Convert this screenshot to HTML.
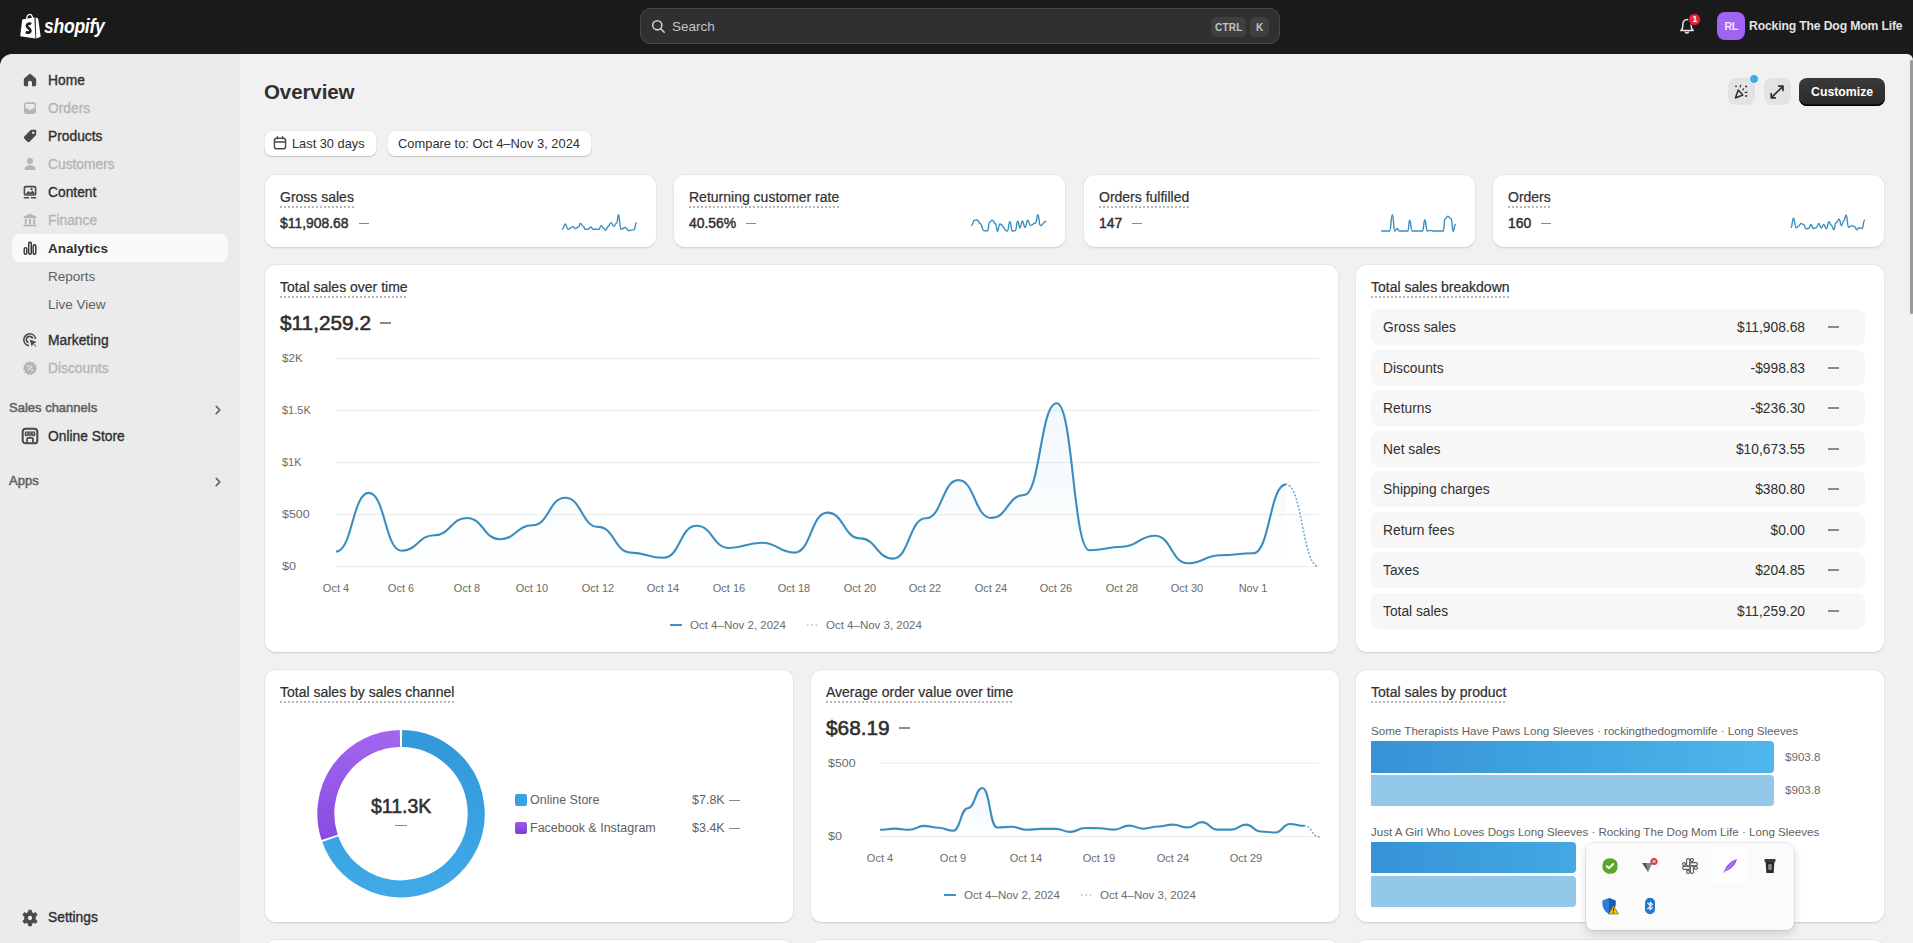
<!DOCTYPE html>
<html><head><meta charset="utf-8">
<style>
*{box-sizing:border-box;margin:0;padding:0}
html,body{width:1913px;height:943px;overflow:hidden;background:#1a1a1a;font-family:"Liberation Sans",sans-serif;color:#303030}
.abs{position:absolute}
.t{position:absolute;white-space:nowrap;line-height:1}
#top{position:absolute;left:0;top:0;width:1913px;height:54px;background:#1a1a1a}
#side{position:absolute;left:0;top:54px;width:240px;height:889px;background:#ebebeb;border-top-left-radius:12px}
#main{position:absolute;left:240px;top:54px;width:1673px;height:889px;background:#f1f1f1;border-top-right-radius:6px}
.nav{position:absolute;left:48px;font-size:13.8px;font-weight:normal;-webkit-text-stroke:0.35px currentColor;color:#303030;line-height:20px;height:20px}
.nav.dis{color:#b5b5b5}
.nav.sub{font-weight:normal;color:#616161;font-size:13.5px;-webkit-text-stroke:0}
.ico{position:absolute;left:22px;width:16px;height:16px}
.card{position:absolute;background:#fff;border-radius:12px;border:1px solid #e6e6e6;border-bottom-color:#d6d6d6;box-shadow:0 1px 1px 0 rgba(26,26,26,.05)}
.ttl{position:absolute;font-size:14px;font-weight:normal;-webkit-text-stroke:0.22px #303030;color:#303030;white-space:nowrap;line-height:16px;padding-bottom:2.5px;background-image:linear-gradient(90deg,#b8b8b8 50%,transparent 50%);background-size:4px 2px;background-repeat:repeat-x;background-position:0 100%}
.val{position:absolute;font-size:13.9px;font-weight:normal;-webkit-text-stroke:0.45px #303030;color:#303030;white-space:nowrap;line-height:16px}
.dash{display:inline-block;width:10px;height:1.5px;background:#8a8a8a;vertical-align:middle;margin-left:10px;position:relative;top:-1px}
.spark{position:absolute;top:200px;width:90px;height:40px}
.row{position:absolute;left:1371px;width:494px;height:36px;background:#f7f7f7;border-radius:8px;font-size:13.8px;color:#303030}
.row .l{position:absolute;left:12px;top:10.5px;line-height:16px}
.row .r{position:absolute;right:60px;top:10.5px;line-height:16px}
.row .d{position:absolute;left:457px;top:17px;width:11px;height:1.5px;background:#8a8a8a}
.ax{position:absolute;font-size:11px;color:#6b6b6b;white-space:nowrap;line-height:12px}
.grid{position:absolute;height:1px;background:#ebebeb}
</style></head><body>
<div id="top">
  <!-- shopify logo -->
  <svg class="abs" style="left:19px;top:13px" width="23" height="26" viewBox="0 0 23 26">
    <path d="M3.2,6.6 L15.4,4.2 L16.4,25.6 L1.2,23.3 Z" fill="#fff"/>
    <path d="M16.6,4.6 L19.2,5.4 L21.7,23.8 L17.2,25.6 Z" fill="#fff"/>
    <path d="M7.5,7 C7.6,3 9.2,1.4 10.8,1.3 C12.4,1.2 13.3,3 13.6,5.6" fill="none" stroke="#fff" stroke-width="1.3"/>
    <path d="M12,11.2 C10.8,10.3 7.9,10.4 7.9,12.8 C7.9,15 11.6,15.3 11.4,17.8 C11.2,19.9 8.6,20 6.8,19" fill="none" stroke="#1a1a1a" stroke-width="2.7"/>
  </svg>
  <div class="t" style="left:44px;top:17px;font-size:19.5px;font-weight:bold;font-style:italic;color:#fff;letter-spacing:-0.3px;transform:scaleX(0.9);transform-origin:0 0">shopify</div>
  <!-- search -->
  <div class="abs" style="left:640px;top:8px;width:640px;height:36px;background:#303030;border:1px solid #474747;border-radius:10px"></div>
  <svg class="abs" style="left:651px;top:19px" width="15" height="15" viewBox="0 0 15 15"><circle cx="6.3" cy="6.3" r="4.6" fill="none" stroke="#cfcfcf" stroke-width="1.6"/><path d="M9.8,9.8 L13.2,13.2" stroke="#cfcfcf" stroke-width="1.6" stroke-linecap="round"/></svg>
  <div class="t" style="left:672px;top:19px;font-size:13.5px;color:#c4c4c4;line-height:15px">Search</div>
  <div class="abs" style="left:1211px;top:17px;width:35px;height:20px;background:#3f3f3f;border-radius:5px"></div>
  <div class="t" style="left:1215px;top:22px;font-size:10px;font-weight:bold;color:#c4c4c4;line-height:11px;letter-spacing:0.2px">CTRL</div>
  <div class="abs" style="left:1250px;top:17px;width:19px;height:20px;background:#3f3f3f;border-radius:5px"></div>
  <div class="t" style="left:1256px;top:22px;font-size:10px;font-weight:bold;color:#c4c4c4;line-height:11px">K</div>
  <!-- bell -->
  <svg class="abs" style="left:1677px;top:16px" width="20" height="20" viewBox="0 0 20 20"><path d="M3.8,14.6 C5.2,13.6 5.8,12 5.8,10.2 L5.8,8.4 C5.8,5.8 7.6,3.6 10,3.6 C12.4,3.6 14.2,5.8 14.2,8.4 L14.2,10.2 C14.2,12 14.8,13.6 16.2,14.6 Z" fill="none" stroke="#e6e6e6" stroke-width="1.5" stroke-linejoin="round"/><path d="M8.4,15.6 C8.4,17.6 11.6,17.6 11.6,15.6" fill="none" stroke="#e6e6e6" stroke-width="1.5"/></svg>
  <div class="abs" style="left:1688px;top:12.5px;width:13px;height:13px;border-radius:50%;background:#e02838;border:1px solid #3a1418"></div>
  <div class="t" style="left:1692.5px;top:15px;font-size:8.5px;font-weight:bold;color:#fff;line-height:9px">1</div>
  <!-- avatar -->
  <div class="abs" style="left:1717px;top:12px;width:28px;height:28px;border-radius:8px;background:#a064f2"></div>
  <div class="t" style="left:1724.5px;top:21px;font-size:10.5px;font-weight:bold;color:#f6e6ff;line-height:11px;letter-spacing:-0.3px">RL</div>
  <div class="t" style="left:1749px;top:19px;font-size:12.2px;font-weight:bold;color:#e3e3e3;line-height:14px;letter-spacing:-0.15px">Rocking The Dog Mom Life</div>
</div>

<div id="side">
</div>
<!-- nav icons & labels -->
<svg class="ico" style="top:72px" viewBox="0 0 16 16"><path d="M8,1.6 L13.6,6.2 C14,6.5 14.2,7 14.2,7.5 L14.2,12.8 C14.2,13.6 13.6,14.2 12.8,14.2 L10,14.2 L10,10.6 C10,9.5 9.1,8.8 8,8.8 C6.9,8.8 6,9.5 6,10.6 L6,14.2 L3.2,14.2 C2.4,14.2 1.8,13.6 1.8,12.8 L1.8,7.5 C1.8,7 2,6.5 2.4,6.2 Z" fill="#4a4a4a"/></svg>
<div class="nav" style="top:71px">Home</div>
<svg class="ico" style="top:100px" viewBox="0 0 16 16"><rect x="2" y="2.2" width="12" height="11.8" rx="2.4" fill="#b5b5b5"/><path d="M3.6,4 L12.4,4 L12.4,8.4 L10.4,8.4 L8,10.6 L5.6,8.4 L3.6,8.4 Z" fill="#ebebeb"/></svg>
<div class="nav dis" style="top:99px">Orders</div>
<svg class="ico" style="top:128px" viewBox="0 0 16 16"><path d="M9.6,1.8 L13.2,1.8 C13.8,1.8 14.2,2.2 14.2,2.8 L14.2,6.4 C14.2,6.9 14,7.3 13.7,7.6 L7.6,13.7 C7,14.3 6,14.3 5.4,13.7 L2.3,10.6 C1.7,10 1.7,9 2.3,8.4 L8.4,2.3 C8.7,2 9.1,1.8 9.6,1.8 Z" fill="#4a4a4a"/><circle cx="11.3" cy="4.7" r="1.2" fill="#ebebeb"/></svg>
<div class="nav" style="top:127px">Products</div>
<svg class="ico" style="top:156px" viewBox="0 0 16 16"><circle cx="8" cy="5" r="3" fill="#b5b5b5"/><path d="M2.5,14 C2.5,10.8 4.8,9.3 8,9.3 C11.2,9.3 13.5,10.8 13.5,14 Z" fill="#b5b5b5"/></svg>
<div class="nav dis" style="top:155px">Customers</div>
<svg class="ico" style="top:184px" viewBox="0 0 16 16"><rect x="1.6" y="1.8" width="12.8" height="10" rx="2" fill="#4a4a4a"/><rect x="3.2" y="3.4" width="9.6" height="6.8" rx=".8" fill="#ebebeb"/><path d="M3.6,10 L6.4,7 L8.4,8.8 L10.4,6.6 L12.6,9 L12.6,10 Z" fill="#4a4a4a"/><circle cx="9.6" cy="5.2" r="1.1" fill="#4a4a4a"/><rect x="1.6" y="13" width="5.6" height="1.6" rx=".8" fill="#4a4a4a"/><rect x="8.6" y="13" width="5.8" height="1.6" rx=".8" fill="#4a4a4a"/></svg>
<div class="nav" style="top:183px">Content</div>
<svg class="ico" style="top:212px" viewBox="0 0 16 16"><path d="M8,1.4 L14.4,4.8 L14.4,6.2 L1.6,6.2 L1.6,4.8 Z" fill="#b5b5b5"/><rect x="2.8" y="7" width="2" height="5" fill="#b5b5b5"/><rect x="7" y="7" width="2" height="5" fill="#b5b5b5"/><rect x="11.2" y="7" width="2" height="5" fill="#b5b5b5"/><rect x="1.6" y="12.6" width="12.8" height="1.8" fill="#b5b5b5"/></svg>
<div class="nav dis" style="top:211px">Finance</div>
<div class="abs" style="left:12px;top:234px;width:216px;height:28px;background:#fafafa;border-radius:8px"></div>
<svg class="ico" style="top:240px" viewBox="0 0 16 16"><rect x="2.2" y="7.6" width="2.6" height="6.6" rx="1.3" fill="none" stroke="#303030" stroke-width="1.4"/><rect x="6.7" y="2.2" width="2.6" height="12" rx="1.3" fill="none" stroke="#303030" stroke-width="1.4"/><rect x="11.2" y="4.8" width="2.6" height="9.4" rx="1.3" fill="none" stroke="#303030" stroke-width="1.4"/></svg>
<div class="nav" style="top:239px;color:#303030;font-weight:bold;font-size:13.5px;-webkit-text-stroke:0">Analytics</div>
<div class="nav sub" style="top:267px">Reports</div>
<div class="nav sub" style="top:295px">Live View</div>
<svg class="ico" style="top:332px" viewBox="0 0 16 16"><path d="M13.6,7 C13.2,4 10.8,1.8 7.8,1.8 C4.5,1.8 1.8,4.5 1.8,7.8 C1.8,10.8 4,13.2 7,13.6" fill="none" stroke="#4a4a4a" stroke-width="1.6"/><path d="M10.6,6.6 C10.2,5.2 9.1,4.4 7.8,4.4 C5.9,4.4 4.4,5.9 4.4,7.8 C4.4,9.1 5.2,10.2 6.6,10.6" fill="none" stroke="#4a4a4a" stroke-width="1.6"/><path d="M7.6,7.6 L14.6,10 L11.6,11.4 L14.4,14.2 L13.8,14.8 L11,12 L9.8,14.8 Z" fill="#4a4a4a"/></svg>
<div class="nav" style="top:331px">Marketing</div>
<svg class="ico" style="top:360px" viewBox="0 0 16 16"><path d="M8,1.2 L9.7,2.6 L11.9,2.3 L12.6,4.4 L14.6,5.3 L14,7.5 L15,9.4 L13.3,10.8 L13.2,13 L11,13.4 L9.8,15.2 L8,14 L6.2,15.2 L5,13.4 L2.8,13 L2.7,10.8 L1,9.4 L2,7.5 L1.4,5.3 L3.4,4.4 L4.1,2.3 L6.3,2.6 Z" fill="#b5b5b5"/><path d="M5.8,10.4 L10.2,5.6" stroke="#ebebeb" stroke-width="1.3"/><circle cx="6" cy="6" r="1" fill="#ebebeb"/><circle cx="10" cy="10" r="1" fill="#ebebeb"/></svg>
<div class="nav dis" style="top:359px">Discounts</div>
<div class="t" style="left:9px;top:401px;font-size:13px;color:#616161;-webkit-text-stroke:0.5px #616161;line-height:14px">Sales channels</div>
<svg class="abs" style="left:212px;top:404px" width="12" height="12" viewBox="0 0 12 12"><path d="M4.2,2.4 L7.8,6 L4.2,9.6" fill="none" stroke="#616161" stroke-width="1.6" stroke-linecap="round" stroke-linejoin="round"/></svg>
<svg class="ico" style="top:427px;left:21px;width:18px;height:18px" viewBox="0 0 16 16"><rect x="1.5" y="1.5" width="13" height="13" rx="2.6" fill="none" stroke="#4a4a4a" stroke-width="1.8"/><path d="M3.6,4 L12.4,4 L12.8,6.6 C12.8,7.6 12.1,8.2 11.2,8.2 C10.4,8.2 9.6,7.6 9.6,6.8 C9.6,7.6 8.8,8.2 8,8.2 C7.2,8.2 6.4,7.6 6.4,6.8 C6.4,7.6 5.6,8.2 4.8,8.2 C3.9,8.2 3.2,7.6 3.2,6.6 Z" fill="#4a4a4a"/><path d="M5.2,4.6 L5,7 M8,4.6 L8,7 M10.8,4.6 L11,7" stroke="#ebebeb" stroke-width=".6"/><path d="M5.4,14 L5.4,10.6 C5.4,10 5.8,9.6 6.4,9.6 L9.6,9.6 C10.2,9.6 10.6,10 10.6,10.6 L10.6,14" fill="none" stroke="#4a4a4a" stroke-width="1.6"/></svg>
<div class="nav" style="top:427px">Online Store</div>
<div class="t" style="left:9px;top:474px;font-size:13px;color:#616161;-webkit-text-stroke:0.5px #616161;line-height:14px">Apps</div>
<svg class="abs" style="left:212px;top:476px" width="12" height="12" viewBox="0 0 12 12"><path d="M4.2,2.4 L7.8,6 L4.2,9.6" fill="none" stroke="#616161" stroke-width="1.6" stroke-linecap="round" stroke-linejoin="round"/></svg>
<svg class="ico" style="top:909px;left:21px;width:18px;height:18px" viewBox="0 0 16 16"><path d="M6.7,1 L9.3,1 L9.7,3.1 L11.1,3.9 L13.1,3.2 L14.4,5.4 L12.8,6.8 L12.8,9.2 L14.4,10.6 L13.1,12.8 L11.1,12.1 L9.7,12.9 L9.3,15 L6.7,15 L6.3,12.9 L4.9,12.1 L2.9,12.8 L1.6,10.6 L3.2,9.2 L3.2,6.8 L1.6,5.4 L2.9,3.2 L4.9,3.9 L6.3,3.1 Z" fill="#4a4a4a" stroke="#4a4a4a" stroke-width=".6" stroke-linejoin="round"/><circle cx="8" cy="8" r="1.9" fill="#ebebeb"/></svg>
<div class="nav" style="top:908px">Settings</div>

<div id="main"></div>
<!-- header -->
<div class="t" style="left:264px;top:81px;font-size:20.5px;font-weight:bold;color:#303030;line-height:22px;letter-spacing:-0.1px">Overview</div>
<div class="abs" style="left:1728px;top:78px;width:27px;height:27px;background:#e3e3e3;border-radius:8px"></div>
<svg class="abs" style="left:1731px;top:82px" width="20" height="20" viewBox="0 0 20 20"><path d="M4.4,16 L7.2,7.9 L11.8,13 Z" fill="none" stroke="#303030" stroke-width="1.5" stroke-linejoin="round"/><rect x="4.2" y="3.5" width="1.6" height="1.6" transform="rotate(45 5 4.3)" fill="#303030"/><path d="M9.7,3.4 L9.2,5" stroke="#303030" stroke-width="1.2" stroke-linecap="round"/><circle cx="15.2" cy="4.5" r="1" fill="#303030"/><path d="M12.6,6.8 L11.8,7.8" stroke="#303030" stroke-width="1.2" stroke-linecap="round"/><path d="M14.2,10.6 L16,10.1" stroke="#303030" stroke-width="1.2" stroke-linecap="round"/><circle cx="15.2" cy="14.1" r="1" fill="#303030"/></svg>
<div class="abs" style="left:1749px;top:74px;width:10px;height:10px;border-radius:50%;background:#44a7ec;border:1px solid #e8f6ff"></div>
<div class="abs" style="left:1764px;top:78px;width:27px;height:27px;background:#e3e3e3;border-radius:8px"></div>
<svg class="abs" style="left:1767px;top:82px" width="20" height="20" viewBox="0 0 20 20"><path d="M11.8,4.2 L16,4.2 L16,8.4 M15.6,4.6 L4.6,15.4 M4.2,11.6 L4.2,15.8 L8.4,15.8" fill="none" stroke="#303030" stroke-width="1.7" stroke-linecap="round" stroke-linejoin="round"/></svg>
<div class="abs" style="left:1799px;top:78px;width:86px;height:28px;background:linear-gradient(#3a3a3a,#2a2a2a);border-radius:8px;box-shadow:inset 0 -1.5px 0 #000"></div>
<div class="t" style="left:1811px;top:85px;font-size:12.3px;font-weight:bold;color:#fff;line-height:14px">Customize</div>

<div class="abs" style="left:264px;top:130px;width:113px;height:27px;background:#fff;border-radius:8px;box-shadow:inset 0 -1px 0 rgba(0,0,0,.17),inset 0 0 0 1px rgba(0,0,0,.08)"></div>
<svg class="abs" style="left:272px;top:135px" width="16" height="16" viewBox="0 0 16 16"><rect x="2.4" y="3.2" width="11.2" height="10.6" rx="2.4" fill="none" stroke="#4a4a4a" stroke-width="1.4"/><path d="M2.6,7 L13.4,7 M5.4,1.8 L5.4,3.6 M10.6,1.8 L10.6,3.6" stroke="#4a4a4a" stroke-width="1.4" stroke-linecap="round"/></svg>
<div class="t" style="left:292px;top:137px;font-size:12.8px;color:#303030;line-height:14px">Last 30 days</div>
<div class="abs" style="left:387px;top:130px;width:205px;height:27px;background:#fff;border-radius:8px;box-shadow:inset 0 -1px 0 rgba(0,0,0,.17),inset 0 0 0 1px rgba(0,0,0,.08)"></div>
<div class="t" style="left:398px;top:137px;font-size:12.9px;color:#303030;line-height:14px">Compare to: Oct 4–Nov 3, 2024</div>

<!-- metric cards -->
<div class="card" style="left:264px;top:174px;width:393px;height:74px"></div>
<div class="ttl" style="left:280px;top:189px">Gross sales</div>
<div class="val" style="left:280px;top:215px">$11,908.68<span class="dash"></span></div>
<svg class="spark" style="left:555px" viewBox="0 0 1913 850" preserveAspectRatio="none"><path d="M155.0,620.0 C187.5,620.0 187.5,510.0 220.0,510.0 C247.5,510.0 247.5,625.0 275.0,625.0 C327.5,625.0 327.5,565.0 380.0,565.0 C405.0,565.0 405.0,605.0 430.0,605.0 C465.0,605.0 465.0,575.0 500.0,575.0 C520.0,575.0 520.0,500.0 540.0,500.0 C570.0,500.0 570.0,560.0 600.0,560.0 C620.0,560.0 620.0,620.0 640.0,620.0 C670.0,620.0 670.0,625.0 700.0,625.0 C730.0,625.0 730.0,575.0 760.0,575.0 C785.0,575.0 785.0,620.0 810.0,620.0 C870.0,620.0 870.0,625.0 930.0,625.0 C955.0,625.0 955.0,545.0 980.0,545.0 C1000.0,545.0 1000.0,590.0 1020.0,590.0 C1050.0,590.0 1050.0,640.0 1080.0,640.0 C1100.0,640.0 1100.0,570.0 1120.0,570.0 C1155.0,570.0 1155.0,480.0 1190.0,480.0 C1220.0,480.0 1220.0,560.0 1250.0,560.0 C1280.0,560.0 1280.0,490.0 1310.0,490.0 C1330.0,490.0 1330.0,315.0 1350.0,315.0 C1375.0,315.0 1375.0,620.0 1400.0,620.0 C1450.0,620.0 1450.0,585.0 1500.0,585.0 C1530.0,585.0 1530.0,650.0 1560.0,650.0 C1620.0,650.0 1620.0,630.0 1680.0,630.0 C1705.0,630.0 1705.0,490.0 1730.0,490.0" fill="none" stroke="#3b8dbf" stroke-width="30" stroke-linejoin="round" stroke-linecap="round"/></svg>
<div class="card" style="left:673px;top:174px;width:393px;height:74px"></div>
<div class="ttl" style="left:689px;top:189px">Returning customer rate</div>
<div class="val" style="left:689px;top:215px">40.56%<span class="dash"></span></div>
<svg class="spark" style="left:965px" viewBox="0 0 1913 850" preserveAspectRatio="none"><path d="M140.0,545.0 C170.0,545.0 170.0,430.0 200.0,430.0 C230.0,430.0 230.0,425.0 260.0,425.0 C290.0,425.0 290.0,500.0 320.0,500.0 C360.0,500.0 360.0,650.0 400.0,650.0 C440.0,650.0 440.0,655.0 480.0,655.0 C500.0,655.0 500.0,470.0 520.0,470.0 C550.0,470.0 550.0,430.0 580.0,430.0 C615.0,430.0 615.0,510.0 650.0,510.0 C670.0,510.0 670.0,665.0 690.0,665.0 C715.0,665.0 715.0,510.0 740.0,510.0 C820.0,510.0 820.0,660.0 900.0,660.0 C927.5,660.0 927.5,460.0 955.0,460.0 C980.0,460.0 980.0,660.0 1005.0,660.0 C1037.5,660.0 1037.5,650.0 1070.0,650.0 C1095.0,650.0 1095.0,450.0 1120.0,450.0 C1145.0,450.0 1145.0,590.0 1170.0,590.0 C1195.0,590.0 1195.0,445.0 1220.0,445.0 C1247.5,445.0 1247.5,585.0 1275.0,585.0 C1305.0,585.0 1305.0,430.0 1335.0,430.0 C1362.5,430.0 1362.5,540.0 1390.0,540.0 C1445.0,540.0 1445.0,490.0 1500.0,490.0 C1525.0,490.0 1525.0,310.0 1550.0,310.0 C1575.0,310.0 1575.0,545.0 1600.0,545.0 C1660.0,545.0 1660.0,455.0 1720.0,455.0" fill="none" stroke="#3b8dbf" stroke-width="30" stroke-linejoin="round" stroke-linecap="round"/></svg>
<div class="card" style="left:1083px;top:174px;width:393px;height:74px"></div>
<div class="ttl" style="left:1099px;top:189px">Orders fulfilled</div>
<div class="val" style="left:1099px;top:215px">147<span class="dash"></span></div>
<svg class="spark" style="left:1375px" viewBox="0 0 1913 850" preserveAspectRatio="none"><path d="M140.0,660.0 C225.0,660.0 225.0,660.0 310.0,660.0 C340.0,660.0 340.0,310.0 370.0,310.0 C395.0,310.0 395.0,660.0 420.0,660.0 C445.0,660.0 445.0,605.0 470.0,605.0 C495.0,605.0 495.0,660.0 520.0,660.0 C610.0,660.0 610.0,660.0 700.0,660.0 C717.5,660.0 717.5,430.0 735.0,430.0 C762.5,430.0 762.5,660.0 790.0,660.0 C900.0,660.0 900.0,660.0 1010.0,660.0 C1035.0,660.0 1035.0,420.0 1060.0,420.0 C1085.0,420.0 1085.0,660.0 1110.0,660.0 C1145.0,660.0 1145.0,645.0 1180.0,645.0 C1200.0,645.0 1200.0,660.0 1220.0,660.0 C1335.0,660.0 1335.0,660.0 1450.0,660.0 C1470.0,660.0 1470.0,400.0 1490.0,400.0 C1520.0,400.0 1520.0,345.0 1550.0,345.0 C1585.0,345.0 1585.0,400.0 1620.0,400.0 C1640.0,400.0 1640.0,665.0 1660.0,665.0 C1685.0,665.0 1685.0,520.0 1710.0,520.0" fill="none" stroke="#3b8dbf" stroke-width="30" stroke-linejoin="round" stroke-linecap="round"/></svg>
<div class="card" style="left:1492px;top:174px;width:393px;height:74px"></div>
<div class="ttl" style="left:1508px;top:189px">Orders</div>
<div class="val" style="left:1508px;top:215px">160<span class="dash"></span></div>
<svg class="spark" style="left:1785px" viewBox="0 0 1913 850" preserveAspectRatio="none"><path d="M130.0,580.0 C155.0,580.0 155.0,385.0 180.0,385.0 C207.5,385.0 207.5,590.0 235.0,590.0 C262.5,590.0 262.5,555.0 290.0,555.0 C315.0,555.0 315.0,500.0 340.0,500.0 C370.0,500.0 370.0,520.0 400.0,520.0 C422.5,520.0 422.5,610.0 445.0,610.0 C477.5,610.0 477.5,600.0 510.0,600.0 C532.5,600.0 532.5,520.0 555.0,520.0 C577.5,520.0 577.5,605.0 600.0,605.0 C630.0,605.0 630.0,590.0 660.0,590.0 C690.0,590.0 690.0,500.0 720.0,500.0 C745.0,500.0 745.0,595.0 770.0,595.0 C797.5,595.0 797.5,520.0 825.0,520.0 C852.5,520.0 852.5,610.0 880.0,610.0 C907.5,610.0 907.5,460.0 935.0,460.0 C957.5,460.0 957.5,530.0 980.0,530.0 C1010.0,530.0 1010.0,630.0 1040.0,630.0 C1060.0,630.0 1060.0,490.0 1080.0,490.0 C1115.0,490.0 1115.0,410.0 1150.0,410.0 C1175.0,410.0 1175.0,545.0 1200.0,545.0 C1225.0,545.0 1225.0,440.0 1250.0,440.0 C1275.0,440.0 1275.0,320.0 1300.0,320.0 C1325.0,320.0 1325.0,580.0 1350.0,580.0 C1385.0,580.0 1385.0,545.0 1420.0,545.0 C1450.0,545.0 1450.0,565.0 1480.0,565.0 C1502.5,565.0 1502.5,635.0 1525.0,635.0 C1547.5,635.0 1547.5,590.0 1570.0,590.0 C1605.0,590.0 1605.0,605.0 1640.0,605.0 C1665.0,605.0 1665.0,430.0 1690.0,430.0" fill="none" stroke="#3b8dbf" stroke-width="30" stroke-linejoin="round" stroke-linecap="round"/></svg>

<!-- total sales over time -->
<div class="card" style="left:264px;top:264px;width:1075px;height:389px"></div>
<div class="ttl" style="left:280px;top:279px">Total sales over time</div>
<div class="t" style="left:280px;top:312px;font-size:20.8px;font-weight:normal;-webkit-text-stroke:0.6px #303030;color:#303030;line-height:22px">$11,259.2<span class="dash" style="margin-left:9px;width:11px;height:2px;top:-2px;-webkit-text-stroke:0"></span></div>
<svg class="abs" style="left:0;top:0;z-index:5;pointer-events:none" width="1913" height="943" viewBox="0 0 1913 943">
  <defs><linearGradient id="gf" x1="0" y1="0" x2="0" y2="1"><stop offset="0" stop-color="#3f93c6" stop-opacity=".07"/><stop offset="1" stop-color="#3f93c6" stop-opacity=".005"/></linearGradient></defs>
  <g fill="#ededed">
    <rect x="336" y="358" width="983" height="1.2"/><rect x="336" y="410" width="983" height="1.2"/><rect x="336" y="462" width="983" height="1.2"/><rect x="336" y="514" width="983" height="1.2"/><rect x="336" y="566" width="983" height="1.2"/>
    <rect x="880" y="762.5" width="439" height="1.2"/><rect x="880" y="836" width="439" height="1.2"/>
  </g>
  <path d="M336.0,551.6 C352.4,551.6 352.4,492.9 368.8,492.9 C385.1,492.9 385.1,550.7 401.5,550.7 C417.9,550.7 417.9,535.2 434.3,535.2 C450.7,535.2 450.7,518.0 467.0,518.0 C483.4,518.0 483.4,539.2 499.8,539.2 C516.2,539.2 516.2,525.3 532.6,525.3 C548.9,525.3 548.9,497.8 565.3,497.8 C581.7,497.8 581.7,526.9 598.1,526.9 C614.5,526.9 614.5,552.6 630.8,552.6 C647.2,552.6 647.2,557.8 663.6,557.8 C680.0,557.8 680.0,525.8 696.4,525.8 C712.7,525.8 712.7,548.0 729.1,548.0 C745.5,548.0 745.5,542.7 761.9,542.7 C778.3,542.7 778.3,552.6 794.6,552.6 C811.0,552.6 811.0,512.6 827.4,512.6 C843.8,512.6 843.8,538.4 860.2,538.4 C876.5,538.4 876.5,558.6 892.9,558.6 C909.3,558.6 909.3,518.3 925.7,518.3 C942.1,518.3 942.1,480.1 958.4,480.1 C974.8,480.1 974.8,517.9 991.2,517.9 C1007.6,517.9 1007.6,495.0 1024.0,495.0 C1040.3,495.0 1040.3,403.3 1056.7,403.3 C1073.1,403.3 1073.1,550.3 1089.5,550.3 C1105.9,550.3 1105.9,546.7 1122.2,546.7 C1138.6,546.7 1138.6,535.7 1155.0,535.7 C1171.4,535.7 1171.4,563.3 1187.8,563.3 C1204.1,563.3 1204.1,555.2 1220.5,555.2 C1236.9,555.2 1236.9,553.3 1253.3,553.3 C1269.7,553.3 1269.7,484.4 1286.0,484.4 L1286.0,566.7 L336,566.7 Z" fill="url(#gf)"/>
  <path d="M336.0,551.6 C352.4,551.6 352.4,492.9 368.8,492.9 C385.1,492.9 385.1,550.7 401.5,550.7 C417.9,550.7 417.9,535.2 434.3,535.2 C450.7,535.2 450.7,518.0 467.0,518.0 C483.4,518.0 483.4,539.2 499.8,539.2 C516.2,539.2 516.2,525.3 532.6,525.3 C548.9,525.3 548.9,497.8 565.3,497.8 C581.7,497.8 581.7,526.9 598.1,526.9 C614.5,526.9 614.5,552.6 630.8,552.6 C647.2,552.6 647.2,557.8 663.6,557.8 C680.0,557.8 680.0,525.8 696.4,525.8 C712.7,525.8 712.7,548.0 729.1,548.0 C745.5,548.0 745.5,542.7 761.9,542.7 C778.3,542.7 778.3,552.6 794.6,552.6 C811.0,552.6 811.0,512.6 827.4,512.6 C843.8,512.6 843.8,538.4 860.2,538.4 C876.5,538.4 876.5,558.6 892.9,558.6 C909.3,558.6 909.3,518.3 925.7,518.3 C942.1,518.3 942.1,480.1 958.4,480.1 C974.8,480.1 974.8,517.9 991.2,517.9 C1007.6,517.9 1007.6,495.0 1024.0,495.0 C1040.3,495.0 1040.3,403.3 1056.7,403.3 C1073.1,403.3 1073.1,550.3 1089.5,550.3 C1105.9,550.3 1105.9,546.7 1122.2,546.7 C1138.6,546.7 1138.6,535.7 1155.0,535.7 C1171.4,535.7 1171.4,563.3 1187.8,563.3 C1204.1,563.3 1204.1,555.2 1220.5,555.2 C1236.9,555.2 1236.9,553.3 1253.3,553.3 C1269.7,553.3 1269.7,484.4 1286.0,484.4" fill="none" stroke="#3b8dbf" stroke-width="2.1"/>
  <path d="M1286.0,484.4 C1302.4,484.4 1302.4,566.6 1318.8,566.6" fill="none" stroke="#7fb0cf" stroke-width="1.8" stroke-dasharray="0.5 3.2" stroke-linecap="round"/>
  <path d="M880.0,829.8 C887.3,829.8 887.3,828.6 894.6,828.6 C902.0,828.6 902.0,829.8 909.3,829.8 C916.6,829.8 916.6,825.9 923.9,825.9 C931.2,825.9 931.2,827.7 938.6,827.7 C945.9,827.7 945.9,830.7 953.2,830.7 C960.5,830.7 960.5,808.2 967.8,808.2 C975.2,808.2 975.2,788.0 982.5,788.0 C989.8,788.0 989.8,827.5 997.1,827.5 C1004.4,827.5 1004.4,826.8 1011.8,826.8 C1019.1,826.8 1019.1,829.8 1026.4,829.8 C1033.7,829.8 1033.7,828.9 1041.0,828.9 C1048.4,828.9 1048.4,828.9 1055.7,828.9 C1063.0,828.9 1063.0,831.9 1070.3,831.9 C1077.6,831.9 1077.6,828.0 1085.0,828.0 C1092.3,828.0 1092.3,828.3 1099.6,828.3 C1106.9,828.3 1106.9,829.6 1114.2,829.6 C1121.6,829.6 1121.6,825.6 1128.9,825.6 C1136.2,825.6 1136.2,828.7 1143.5,828.7 C1150.8,828.7 1150.8,826.5 1158.2,826.5 C1165.5,826.5 1165.5,824.6 1172.8,824.6 C1180.1,824.6 1180.1,827.5 1187.4,827.5 C1194.8,827.5 1194.8,822.1 1202.1,822.1 C1209.4,822.1 1209.4,829.6 1216.7,829.6 C1224.0,829.6 1224.0,829.6 1231.4,829.6 C1238.7,829.6 1238.7,824.6 1246.0,824.6 C1253.3,824.6 1253.3,831.5 1260.6,831.5 C1268.0,831.5 1268.0,832.5 1275.3,832.5 C1282.6,832.5 1282.6,824.0 1289.9,824.0 C1297.2,824.0 1297.2,825.8 1304.6,825.8 L1304.6,836.7 L880,836.7 Z" fill="url(#gf)"/>
  <path d="M880.0,829.8 C887.3,829.8 887.3,828.6 894.6,828.6 C902.0,828.6 902.0,829.8 909.3,829.8 C916.6,829.8 916.6,825.9 923.9,825.9 C931.2,825.9 931.2,827.7 938.6,827.7 C945.9,827.7 945.9,830.7 953.2,830.7 C960.5,830.7 960.5,808.2 967.8,808.2 C975.2,808.2 975.2,788.0 982.5,788.0 C989.8,788.0 989.8,827.5 997.1,827.5 C1004.4,827.5 1004.4,826.8 1011.8,826.8 C1019.1,826.8 1019.1,829.8 1026.4,829.8 C1033.7,829.8 1033.7,828.9 1041.0,828.9 C1048.4,828.9 1048.4,828.9 1055.7,828.9 C1063.0,828.9 1063.0,831.9 1070.3,831.9 C1077.6,831.9 1077.6,828.0 1085.0,828.0 C1092.3,828.0 1092.3,828.3 1099.6,828.3 C1106.9,828.3 1106.9,829.6 1114.2,829.6 C1121.6,829.6 1121.6,825.6 1128.9,825.6 C1136.2,825.6 1136.2,828.7 1143.5,828.7 C1150.8,828.7 1150.8,826.5 1158.2,826.5 C1165.5,826.5 1165.5,824.6 1172.8,824.6 C1180.1,824.6 1180.1,827.5 1187.4,827.5 C1194.8,827.5 1194.8,822.1 1202.1,822.1 C1209.4,822.1 1209.4,829.6 1216.7,829.6 C1224.0,829.6 1224.0,829.6 1231.4,829.6 C1238.7,829.6 1238.7,824.6 1246.0,824.6 C1253.3,824.6 1253.3,831.5 1260.6,831.5 C1268.0,831.5 1268.0,832.5 1275.3,832.5 C1282.6,832.5 1282.6,824.0 1289.9,824.0 C1297.2,824.0 1297.2,825.8 1304.6,825.8" fill="none" stroke="#3b8dbf" stroke-width="2.1"/>
  <path d="M1304.6,825.8 C1311.9,825.8 1311.9,836.9 1319.2,836.9" fill="none" stroke="#7fb0cf" stroke-width="1.8" stroke-dasharray="0.5 3.2" stroke-linecap="round"/>
  <!-- donut -->
  <defs>
    <linearGradient id="gb" x1="0" y1="0" x2="0" y2="1"><stop offset="0" stop-color="#3298da"/><stop offset="1" stop-color="#3fa9e8"/></linearGradient>
    <linearGradient id="gp" x1="0" y1="0" x2="0" y2="1"><stop offset="0" stop-color="#a064ee"/><stop offset="1" stop-color="#8a4be2"/></linearGradient>
    <linearGradient id="bar1" x1="0" y1="0" x2="1" y2="0"><stop offset="0" stop-color="#3593d6"/><stop offset="1" stop-color="#4db5ec"/></linearGradient>
    <linearGradient id="bar3" x1="0" y1="0" x2="1" y2="0"><stop offset="0" stop-color="#3593d6"/><stop offset="1" stop-color="#43a8e4"/></linearGradient>
  </defs>
  <path d="M402.05,738.41 A75.20,75.20 0 1 1 330.25,839.07" fill="none" stroke="url(#gb)" stroke-width="17"/>
  <path d="M329.64,837.34 A75.20,75.20 0 0 1 399.95,738.41" fill="none" stroke="url(#gp)" stroke-width="17"/>
</svg>
<div class="ax" style="left:282px;top:352px;transform:scaleX(1.06);transform-origin:0 0">$2K</div>
<div class="ax" style="left:282px;top:404px">$1.5K</div>
<div class="ax" style="left:282px;top:456px">$1K</div>
<div class="ax" style="left:282px;top:508px;transform:scaleX(1.13);transform-origin:0 0">$500</div>
<div class="ax" style="left:282px;top:560px;transform:scaleX(1.15);transform-origin:0 0">$0</div>
<div class="ax" style="left:322px;top:582px;width:28px;text-align:center">Oct 4</div>
<div class="ax" style="left:386px;top:582px;width:30px;text-align:center">Oct 6</div>
<div class="ax" style="left:452px;top:582px;width:30px;text-align:center">Oct 8</div>
<div class="ax" style="left:512px;top:582px;width:40px;text-align:center">Oct 10</div>
<div class="ax" style="left:578px;top:582px;width:40px;text-align:center">Oct 12</div>
<div class="ax" style="left:643px;top:582px;width:40px;text-align:center">Oct 14</div>
<div class="ax" style="left:709px;top:582px;width:40px;text-align:center">Oct 16</div>
<div class="ax" style="left:774px;top:582px;width:40px;text-align:center">Oct 18</div>
<div class="ax" style="left:840px;top:582px;width:40px;text-align:center">Oct 20</div>
<div class="ax" style="left:905px;top:582px;width:40px;text-align:center">Oct 22</div>
<div class="ax" style="left:971px;top:582px;width:40px;text-align:center">Oct 24</div>
<div class="ax" style="left:1036px;top:582px;width:40px;text-align:center">Oct 26</div>
<div class="ax" style="left:1102px;top:582px;width:40px;text-align:center">Oct 28</div>
<div class="ax" style="left:1167px;top:582px;width:40px;text-align:center">Oct 30</div>
<div class="ax" style="left:1233px;top:582px;width:40px;text-align:center">Nov 1</div>
<div class="abs" style="left:670px;top:624px;width:12px;height:2px;background:#3f93c6"></div>
<div class="ax" style="left:690px;top:619px;font-size:11.5px">Oct 4–Nov 2, 2024</div>
<svg class="abs" style="left:806px;top:623px" width="14" height="4"><path d="M1.5,2 L13,2" stroke="#9cc3db" stroke-width="1.6" stroke-dasharray="0.4 4" stroke-linecap="round"/></svg>
<div class="ax" style="left:826px;top:619px;font-size:11.5px">Oct 4–Nov 3, 2024</div>

<!-- breakdown -->
<div class="card" style="left:1355px;top:264px;width:530px;height:389px"></div>
<div class="ttl" style="left:1371px;top:279px">Total sales breakdown</div>
<div class="row" style="top:309px"><span class="l">Gross sales</span><span class="r">$11,908.68</span><span class="d"></span></div>
<div class="row" style="top:350px"><span class="l">Discounts</span><span class="r">-$998.83</span><span class="d"></span></div>
<div class="row" style="top:390px"><span class="l">Returns</span><span class="r">-$236.30</span><span class="d"></span></div>
<div class="row" style="top:431px"><span class="l">Net sales</span><span class="r">$10,673.55</span><span class="d"></span></div>
<div class="row" style="top:471px"><span class="l">Shipping charges</span><span class="r">$380.80</span><span class="d"></span></div>
<div class="row" style="top:512px"><span class="l">Return fees</span><span class="r">$0.00</span><span class="d"></span></div>
<div class="row" style="top:552px"><span class="l">Taxes</span><span class="r">$204.85</span><span class="d"></span></div>
<div class="row" style="top:593px"><span class="l">Total sales</span><span class="r">$11,259.20</span><span class="d"></span></div>

<!-- sales channel -->
<div class="card" style="left:264px;top:669px;width:530px;height:254px"></div>
<div class="ttl" style="left:280px;top:684px">Total sales by sales channel</div>
<div class="t" style="left:371px;top:796px;font-size:19.5px;font-weight:normal;-webkit-text-stroke:0.55px #303030;color:#303030;line-height:20px">$11.3K</div>
<div class="abs" style="left:395px;top:824.5px;width:12px;height:1.5px;background:#8a8a8a"></div>
<div class="abs" style="left:515px;top:794px;width:12px;height:12px;border-radius:2px;background:#3aa1e2"></div>
<div class="t" style="left:530px;top:793px;font-size:12.5px;color:#616161;line-height:15px">Online Store</div>
<div class="t" style="left:692px;top:793px;font-size:12.5px;color:#616161;line-height:15px">$7.8K</div>
<div class="abs" style="left:729px;top:799.5px;width:11px;height:1.2px;background:#8a8a8a"></div>
<div class="abs" style="left:515px;top:822px;width:12px;height:12px;border-radius:2px;background:linear-gradient(#9b5de9,#7f3fd8)"></div>
<div class="t" style="left:530px;top:821px;font-size:12.5px;color:#616161;line-height:15px">Facebook &amp; Instagram</div>
<div class="t" style="left:692px;top:821px;font-size:12.5px;color:#616161;line-height:15px">$3.4K</div>
<div class="abs" style="left:729px;top:827.5px;width:11px;height:1.2px;background:#8a8a8a"></div>

<!-- AOV -->
<div class="card" style="left:810px;top:669px;width:530px;height:254px"></div>
<div class="ttl" style="left:826px;top:684px">Average order value over time</div>
<div class="t" style="left:826px;top:717px;font-size:20.8px;font-weight:normal;-webkit-text-stroke:0.6px #303030;color:#303030;line-height:22px">$68.19<span class="dash" style="margin-left:9px;width:11px;height:2px;top:-2px"></span></div>
<div class="ax" style="left:828px;top:757px;transform:scaleX(1.13);transform-origin:0 0">$500</div>
<div class="ax" style="left:828px;top:830px;transform:scaleX(1.15);transform-origin:0 0">$0</div>
<div class="ax" style="left:860px;top:852px;width:40px;text-align:center">Oct 4</div>
<div class="ax" style="left:933px;top:852px;width:40px;text-align:center">Oct 9</div>
<div class="ax" style="left:1006px;top:852px;width:40px;text-align:center">Oct 14</div>
<div class="ax" style="left:1079px;top:852px;width:40px;text-align:center">Oct 19</div>
<div class="ax" style="left:1153px;top:852px;width:40px;text-align:center">Oct 24</div>
<div class="ax" style="left:1226px;top:852px;width:40px;text-align:center">Oct 29</div>
<div class="abs" style="left:944px;top:894px;width:12px;height:2px;background:#3f93c6"></div>
<div class="ax" style="left:964px;top:889px;font-size:11.5px">Oct 4–Nov 2, 2024</div>
<svg class="abs" style="left:1080px;top:893px" width="14" height="4"><path d="M1.5,2 L13,2" stroke="#9cc3db" stroke-width="1.6" stroke-dasharray="0.4 4" stroke-linecap="round"/></svg>
<div class="ax" style="left:1100px;top:889px;font-size:11.5px">Oct 4–Nov 3, 2024</div>

<!-- by product -->
<div class="card" style="left:1355px;top:669px;width:530px;height:254px"></div>
<div class="ttl" style="left:1371px;top:684px">Total sales by product</div>
<div class="ax" style="left:1371px;top:725px;font-size:11.6px;color:#616161">Some Therapists Have Paws Long Sleeves · rockingthedogmomlife · Long Sleeves</div>
<div class="abs" style="left:1371px;top:741px;width:403px;height:31.5px;background:linear-gradient(90deg,#3593d6,#4fb6ed);border-radius:0 4px 4px 0"></div>
<div class="abs" style="left:1371px;top:775px;width:403px;height:31px;background:#93c8ea;border-radius:0 4px 4px 0"></div>
<div class="ax" style="left:1785px;top:751px;font-size:11.6px">$903.8</div>
<div class="ax" style="left:1785px;top:784px;font-size:11.6px">$903.8</div>
<div class="ax" style="left:1371px;top:826px;font-size:11.6px;color:#616161">Just A Girl Who Loves Dogs Long Sleeves · Rocking The Dog Mom Life · Long Sleeves</div>
<div class="abs" style="left:1371px;top:842px;width:205px;height:31px;background:linear-gradient(90deg,#3593d6,#43a8e4);border-radius:0 4px 4px 0"></div>
<div class="abs" style="left:1371px;top:876px;width:205px;height:31px;background:#93c8ea;border-radius:0 4px 4px 0"></div>

<!-- row 4 card tops -->
<div class="card" style="left:264px;top:939px;width:530px;height:60px"></div>
<div class="card" style="left:810px;top:939px;width:530px;height:60px"></div>
<div class="card" style="left:1355px;top:939px;width:530px;height:60px"></div>

<!-- tray popup -->
<div class="abs" style="left:1586px;top:843px;width:208px;height:87px;background:#fbfbfb;border-radius:8px;box-shadow:0 4px 10px rgba(0,0,0,.15),0 0 0 1px rgba(0,0,0,.06)"></div>
<div class="abs" style="left:1712px;top:847px;width:37px;height:38px;background:#fdfdfd;border-radius:4px;box-shadow:0 0 1px rgba(0,0,0,.06)"></div>
<svg class="abs" style="left:1600px;top:856px" width="20" height="20" viewBox="0 0 20 20"><path d="M10,2.2 C14.6,2.2 17.6,5 17.6,9.6 C17.6,13.6 16.4,17.8 10.6,17.8 C5,17.8 2.4,14.6 2.4,10 C2.4,5.2 5.4,2.2 10,2.2 Z" fill="#5aa52a"/><path d="M6.8,10.2 L9,12.2 L13.2,8" fill="none" stroke="#fff" stroke-width="1.9" stroke-linecap="round" stroke-linejoin="round"/></svg>
<svg class="abs" style="left:1640px;top:856px" width="20" height="20" viewBox="0 0 20 20"><path d="M2,7 L12,7 L8,16 Z" fill="#555"/><path d="M6,7 L12,7 L8,16 Z" fill="#888"/><circle cx="14" cy="5.5" r="3.6" fill="#e0384b"/><path d="M12.6,4.1 L15.4,6.9 M15.4,4.1 L12.6,6.9" stroke="#fff" stroke-width="1"/></svg>
<svg class="abs" style="left:1680px;top:856px" width="20" height="20" viewBox="0 0 20 20"><g fill="#fff" stroke="#5a5a5a" stroke-width="1.1"><rect x="6.6" y="2.6" width="3" height="7.4" rx="1.5"/><rect x="10" y="6.6" width="7.4" height="3" rx="1.5"/><rect x="10.4" y="10" width="3" height="7.4" rx="1.5"/><rect x="2.6" y="10.4" width="7.4" height="3" rx="1.5"/><circle cx="11.9" cy="4.1" r="1.5"/><circle cx="15.9" cy="11.9" r="1.5"/><circle cx="8.1" cy="15.9" r="1.5"/><circle cx="4.1" cy="8.1" r="1.5"/></g></svg>
<svg class="abs" style="left:1720px;top:856px" width="20" height="20" viewBox="0 0 20 20"><path d="M3,17 C6,10 10,5 17,3 C16,8 12,13 5,15.5 Z" fill="#9a5ce0"/><path d="M3,17 L14,6" stroke="#c9a4f2" stroke-width=".8"/></svg>
<svg class="abs" style="left:1760px;top:856px" width="20" height="20" viewBox="0 0 20 20"><path d="M5,3.4 L15,3.4 L14.4,6 L13.6,17 L6.4,17 L5.6,6 Z" fill="#2a2a2a"/><rect x="4.4" y="3" width="11.2" height="3" rx="1.2" fill="#3a3a3a"/><rect x="8.2" y="8" width="3.6" height="6" rx="1" fill="#888"/></svg>
<svg class="abs" style="left:1600px;top:896px" width="20" height="20" viewBox="0 0 20 20"><path d="M9,2 L15.5,4.4 C16,9.5 15,14.6 9,18 C3,14.6 2,9.5 2.5,4.4 Z" fill="#2a7fd4"/><path d="M9,2 L15.5,4.4 C16,9.5 15,14.6 9,18 Z" fill="#1c5fb0"/><path d="M13.5,9.5 L18.5,18 L8.5,18 Z" fill="#f4c20d" stroke="#333" stroke-width=".5"/><rect x="13.1" y="12.2" width=".9" height="3" fill="#222"/><rect x="13.1" y="15.9" width=".9" height=".9" fill="#222"/></svg>
<svg class="abs" style="left:1640px;top:896px" width="20" height="20" viewBox="0 0 20 20"><rect x="5" y="1.8" width="10" height="16.4" rx="5" fill="#1f78d1"/><path d="M7.4,6.8 L12.4,11.6 L10,13.8 L10,6.2 L12.4,8.4 L7.4,13.2" fill="none" stroke="#fff" stroke-width="1.1" stroke-linejoin="round"/></svg>

<!-- scrollbar -->
<div class="abs" style="left:1910px;top:60px;width:3px;height:254px;background:#9a9a9a;border-radius:1px"></div>
</body></html>
